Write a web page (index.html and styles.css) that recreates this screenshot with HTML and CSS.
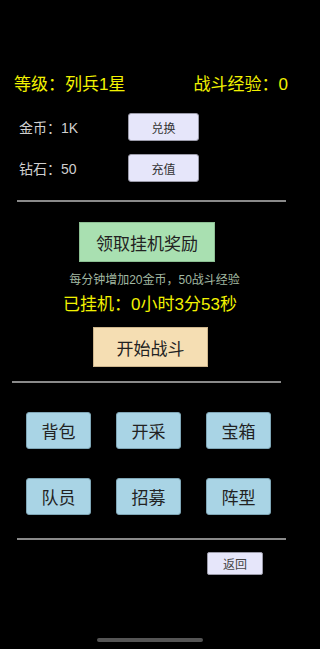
FILE: index.html
```html
<!DOCTYPE html>
<html lang="zh">
<head>
<meta charset="utf-8">
<meta name="viewport" content="width=device-width, initial-scale=1">
<link rel="stylesheet" href="styles.css">
<title>挂机</title>
</head>
<body>
<div class="page">
  <div class="header">
    <span>等级：列兵1星</span>
    <span>战斗经验：0</span>
  </div>

  <div class="currency">
    <div class="row">
      <span class="label">金币：1K</span>
      <button class="btn-small">兑换</button>
    </div>
    <div class="row">
      <span class="label">钻石：50</span>
      <button class="btn-small">充值</button>
    </div>
  </div>

  <div class="divider d1"></div>

  <button class="btn-claim">领取挂机奖励</button>
  <p class="hint">每分钟增加20金币，50战斗经验</p>
  <p class="idle">已挂机：0小时3分53秒</p>
  <button class="btn-battle">开始战斗</button>

  <div class="divider d2"></div>

  <div class="grid">
    <button class="btn-menu">背包</button>
    <button class="btn-menu">开采</button>
    <button class="btn-menu">宝箱</button>
    <button class="btn-menu">队员</button>
    <button class="btn-menu">招募</button>
    <button class="btn-menu">阵型</button>
  </div>

  <div class="divider d3"></div>

  <button class="btn-back">返回</button>

  <div class="home-indicator"></div>
</div>
</body>
</html>
```

FILE: styles.css
```css
html, body {
  margin: 0;
  padding: 0;
  background: #000;
}

body {
  width: 300px;
  height: 649px;
  overflow: hidden;
  font-family: "Liberation Sans", "Noto Sans CJK SC", sans-serif;
}

.page {
  display: flex;
  flex-direction: column;
  align-items: flex-start;
  padding-top: 75px;
}

button {
  font-family: "Liberation Sans", "Noto Sans CJK SC", sans-serif;
  padding: 0;
  margin: 0;
  cursor: pointer;
}

.header {
  align-self: stretch;
  display: flex;
  justify-content: space-between;
  padding: 0 12px 0 14px;
  height: 20px;
  line-height: 20px;
  font-size: 17px;
  color: #f2f200;
}

.currency {
  display: flex;
  flex-direction: column;
  gap: 13px;
  margin-top: 18px;
  padding-left: 19px;
}

.row {
  display: flex;
  align-items: center;
  height: 28px;
}

.label {
  width: 109px;
  font-size: 14px;
  color: #cfcfcf;
}

.btn-small {
  width: 71px;
  height: 28px;
  background: #e6e6fa;
  border: 1px solid #9a9aa8;
  border-radius: 3px;
  font-size: 12px;
  color: #333;
}

.divider {
  height: 2px;
  width: 269px;
  background: #8a8a8a;
}

.d1 {
  margin: 18px 0 0 17px;
}

.btn-claim {
  margin: 20px 0 0 79px;
  width: 136px;
  height: 40px;
  background: #a9e0b1;
  border: 1px solid #8cbf93;
  font-size: 17px;
  color: #222;
}

.hint {
  align-self: stretch;
  margin: 10px 0 0;
  padding-left: 9px;
  text-align: center;
  font-size: 12px;
  line-height: 16px;
  color: #a2b8a2;
}

.idle {
  align-self: stretch;
  margin: 6px 0 0;
  text-align: center;
  font-size: 17px;
  line-height: 22px;
  color: #f2f200;
}

.btn-battle {
  margin: 11px 0 0 93px;
  width: 115px;
  height: 40px;
  background: #f5deb3;
  border: 1px solid #cdb58c;
  font-size: 17px;
  color: #222;
}

.d2 {
  margin: 14px 0 0 12px;
}

.grid {
  display: grid;
  grid-template-columns: repeat(3, 65px);
  grid-auto-rows: 37px;
  column-gap: 25px;
  row-gap: 29px;
  margin: 29px 0 0 26px;
}

.btn-menu {
  background: #a9d4e5;
  border: 1px solid #7fa6b6;
  border-radius: 3px;
  font-size: 17px;
  color: #222;
}

.d3 {
  margin: 23px 0 0 17px;
}

.btn-back {
  margin: 12px 0 0 207px;
  width: 56px;
  height: 23px;
  background: #e6e6fa;
  border: 1px solid #9a9aa8;
  border-radius: 2px;
  font-size: 12px;
  color: #444;
}

.home-indicator {
  margin: 63px 0 0 97px;
  width: 106px;
  height: 4px;
  border-radius: 2px;
  background: #555;
}
```
